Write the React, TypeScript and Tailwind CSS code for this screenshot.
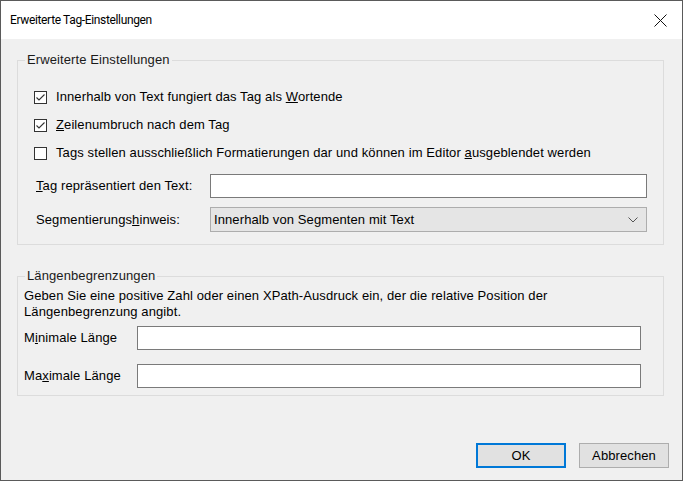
import React from "react";

// Windows-style dialog: "Erweiterte Tag-Einstellungen"

function CheckBox({ checked }: { checked: boolean }) {
  return (
    <span className="w-[13px] h-[13px] border border-[#333333] bg-white flex items-center justify-center shrink-0">
      {checked && (
        <svg width="11" height="11" viewBox="0 0 11 11">
          <polyline points="1.5,5.5 4,8 9.5,2.5" fill="none" stroke="#333333" strokeWidth="1.1" />
        </svg>
      )}
    </span>
  );
}

function CheckRow({ checked, children }: { checked: boolean; children: React.ReactNode }) {
  return (
    <div className="h-[28px] flex items-center gap-[9px]">
      <CheckBox checked={checked} />
      <span>{children}</span>
    </div>
  );
}

export default function App() {
  return (
    <div
      className="w-[683px] h-[481px] border border-[#5a5a5a] flex flex-col text-[13px] tracking-[0.1px] leading-[16px] text-black overflow-hidden"
      style={{ fontFamily: '"Liberation Sans", Arial, sans-serif' }}
    >
      {/* title bar */}
      <div className="h-[38px] bg-white flex items-center justify-between pl-[9px] pr-[15px] shrink-0">
        <span className="text-[12px] tracking-[-0.35px] font-['Roboto',sans-serif]">
          Erweiterte Tag-Einstellungen
        </span>
        <svg width="13" height="13" viewBox="0 0 13 13">
          <line x1="0.5" y1="0.5" x2="12.5" y2="12.5" stroke="#111" strokeWidth="1" />
          <line x1="12.5" y1="0.5" x2="0.5" y2="12.5" stroke="#111" strokeWidth="1" />
        </svg>
      </div>

      <div className="flex-1 bg-[#f0f0f0] pt-[13px] pl-[16px] pr-[18px] flex flex-col">
        {/* Erweiterte Einstellungen */}
        <fieldset className="border border-[#dcdcdc] pl-[16px] pr-[16px] pb-[12px]">
          <legend className="ml-[-9px] px-[2px] text-[#1a1a1a]">Erweiterte Einstellungen</legend>
          <div className="mt-[15px]">
            <CheckRow checked>
              Innerhalb von Text fungiert das Tag als <span className="underline">W</span>ortende
            </CheckRow>
            <CheckRow checked>
              <span className="underline">Z</span>eilenumbruch nach dem Tag
            </CheckRow>
            <CheckRow checked={false}>
              Tags stellen ausschließlich Formatierungen dar und können im Editor{" "}
              <span className="underline">a</span>usgeblendet werden
            </CheckRow>
          </div>
          <div className="mt-[7px] flex items-center">
            <span className="w-[176px] pl-[2px] shrink-0">
              <span className="underline">T</span>ag repräsentiert den Text:
            </span>
            <div className="flex-1 h-[24px] bg-white border border-[#7a7a7a]" />
          </div>
          <div className="mt-[9px] flex items-center">
            <span className="w-[176px] pl-[2px] shrink-0">
              Segmentierungs<span className="underline">h</span>inweis:
            </span>
            <div className="flex-1 h-[25px] bg-[#e5e5e5] border border-[#adadad] flex items-center justify-between pl-[3px] pr-[8px]">
              <span>Innerhalb von Segmenten mit Text</span>
              <svg width="10" height="6" viewBox="0 0 10 6">
                <polyline points="0.5,0.5 5,5 9.5,0.5" fill="none" stroke="#555" strokeWidth="1" />
              </svg>
            </div>
          </div>
        </fieldset>

        {/* Längenbegrenzungen */}
        <fieldset className="mt-[23px] border border-[#dcdcdc] pl-[6px] pr-[22px] pb-[7px]">
          <legend className="ml-[1px] px-[2px] text-[#1a1a1a]">Längenbegrenzungen</legend>
          <p className="mt-[4px]">
            Geben Sie eine positive Zahl oder einen XPath-Ausdruck ein, der die relative Position der
            <br />
            Längenbegrenzung angibt.
          </p>
          <div className="mt-[6px] flex items-center">
            <span className="w-[113px] shrink-0">
              M<span className="underline">i</span>nimale Länge
            </span>
            <div className="flex-1 h-[24px] bg-white border border-[#7a7a7a]" />
          </div>
          <div className="mt-[14px] flex items-center">
            <span className="w-[113px] shrink-0">
              Ma<span className="underline">x</span>imale Länge
            </span>
            <div className="flex-1 h-[24px] bg-white border border-[#7a7a7a]" />
          </div>
        </fieldset>

        <div className="mt-auto mb-[12px] mr-[-5px] flex justify-end gap-[13px]">
          <button className="w-[90px] h-[25px] bg-[#e1e1e1] border-2 border-[#0078d7] text-[13px]">
            OK
          </button>
          <button className="w-[90px] h-[25px] bg-[#e1e1e1] border border-[#adadad] text-[13px]">
            Abbrechen
          </button>
        </div>
      </div>
    </div>
  );
}
